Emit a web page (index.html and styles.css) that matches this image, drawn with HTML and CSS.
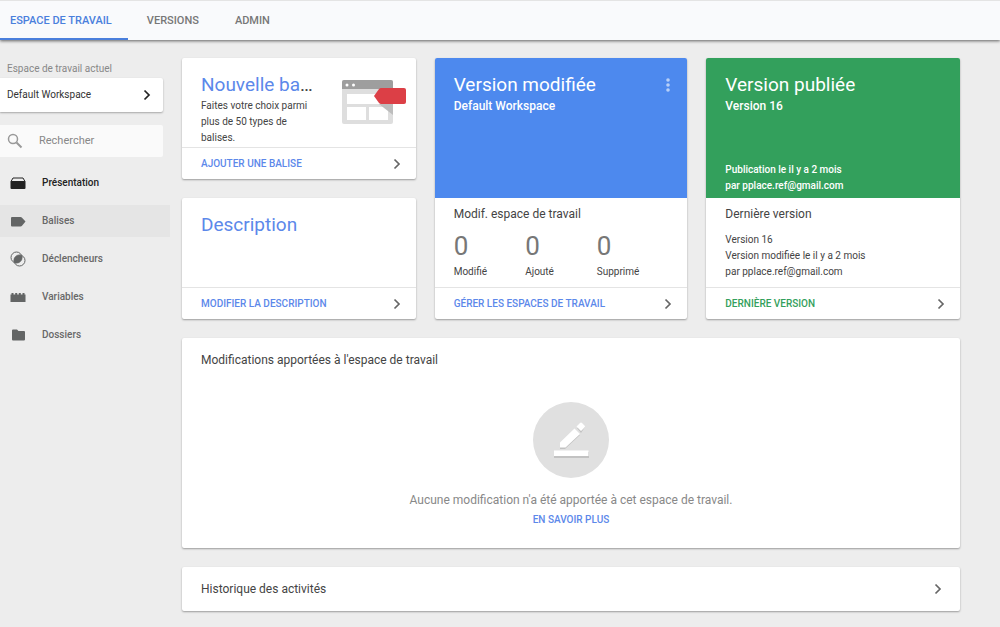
FILE: index.html
```html
<!DOCTYPE html>
<html lang="fr">
<head>
<meta charset="utf-8">
<meta name="viewport" content="width=device-width, initial-scale=1">
<title>Espace de travail</title>
<link rel="stylesheet" href="styles.css">
</head>
<body>
<svg class="defs" aria-hidden="true">
  <symbol id="chevron" viewBox="0 0 8 12"><path d="M1.500 1.500 6 6l-4.500 4.500" fill="none" stroke="currentColor" stroke-width="1.700"/></symbol>
</svg>
<header class="topbar">
  <nav class="tabs">
    <a class="tab tab-active" href="#" aria-current="page">ESPACE DE TRAVAIL</a>
    <a class="tab" href="#">VERSIONS</a>
    <a class="tab" href="#">ADMIN</a>
  </nav>
</header>
<div class="layout">
  <aside class="sidebar">
    <div class="workspace-label" id="workspace-label">Espace de travail actuel</div>
    <button class="workspace" type="button" aria-describedby="workspace-label">Default Workspace <svg class="chevron"><use href="#chevron"/></svg></button>
    <label class="search">
      <svg class="search-icon" viewBox="0 0 16 16" aria-hidden="true"><circle cx="6" cy="6" r="4.500" fill="none" stroke="currentColor" stroke-width="1.500"/><path d="m9.500 9.500 5 5" stroke="currentColor" stroke-width="2"/></svg>
      <input class="search-input" type="text" placeholder="Rechercher" aria-label="Rechercher">
    </label>
    <nav class="menu">
      <a class="menu-item menu-current" href="#"><svg class="menu-icon" viewBox="0 0 16 16"><path d="M1 6.500 3 3h10l2 3.500" fill="none" stroke="currentColor"/><path d="M.5 7q0-1 1-1h13q1 0 1 1v6q0 1-1 1h-13q-1 0-1-1z" fill="currentColor"/></svg>Présentation</a>
      <a class="menu-item menu-hover" href="#"><svg class="menu-icon" viewBox="0 0 16 16"><path d="M2 4h8.500q1 0 1.500.7L15.500 8.500 12 12.800q-.5.700-1.500.7H2q-1 0-1-1V5q0-1 1-1z" fill="currentColor"/></svg>Balises</a>
      <a class="menu-item" href="#"><svg class="menu-icon" viewBox="0 0 16 16"><g fill="none" stroke="currentColor"><circle cx="6.500" cy="6.500" r="5.500"/><circle cx="9.500" cy="9.500" r="5.500"/></g><path d="M11.600 4.400A5.500 5.500 0 0 1 4.400 11.600 5.500 5.500 0 0 1 11.600 4.400z" fill="currentColor"/></svg>Déclencheurs</a>
      <a class="menu-item" href="#"><svg class="menu-icon" viewBox="0 0 16 16"><path d="M.5 13V5.500h1V4h2v1.500h1.700V4h2v1.500h1.600V4h2v1.500h1.700V4h2v1.500h1V13z" fill="currentColor"/></svg>Variables</a>
      <a class="menu-item" href="#"><svg class="menu-icon" viewBox="0 0 16 16"><path d="M3 2.500h4L8.500 4H14q1 0 1 1v7.500q0 1-1 1H3q-1 0-1-1v-9q0-1 1-1z" fill="currentColor"/></svg>Dossiers</a>
    </nav>
  </aside>
  <main class="content">
    <section class="card new-tag">
      <div class="card-body split">
        <div class="split-text">
          <h2 class="title"><span class="blue">Nouvelle ba</span>…</h2>
          <p class="text">Faites votre choix parmi plus de 50 types de balises.</p>
        </div>
        <svg class="tag-art" viewBox="0 0 64 45" aria-hidden="true">
          <rect width="51" height="44" rx="2" fill="#dedede"/>
          <path d="M0 9V2q0-2 2-2h47q2 0 2 2v7z" fill="#9e9e9e"/>
          <circle cx="5" cy="5" r="1.500" fill="#fff"/><circle cx="11.500" cy="5" r="1.500" fill="#fff"/>
          <path d="M5 14h41v10H5zM5 27h19v13H5zM27 27h19v13H27z" fill="#fff"/>
          <path d="m37 24 14 11V24z" fill="#bdbdbd"/>
          <path d="M32 16 37 9q1-1 2-1h23q2 0 2 2v12q0 2-2 2H39q-1 0-2-1z" fill="#dc3f46"/>
        </svg>
      </div>
      <a class="card-link blue" href="#">AJOUTER UNE BALISE <svg class="chevron"><use href="#chevron"/></svg></a>
    </section>
    <section class="card description">
      <div class="card-body"><h2 class="title blue">Description</h2></div>
      <a class="card-link blue" href="#">MODIFIER LA DESCRIPTION <svg class="chevron"><use href="#chevron"/></svg></a>
    </section>
    <section class="card tall">
      <div class="hero hero-blue">
        <div class="hero-top">
          <h2 class="title">Version modifiée</h2>
          <button class="more" type="button" aria-label="Plus d'options"><svg class="more-icon" viewBox="0 0 4 14"><g fill="currentColor"><circle cx="2" cy="2" r="1.800"/><circle cx="2" cy="7" r="1.800"/><circle cx="2" cy="12" r="1.800"/></g></svg></button>
        </div>
        <p class="subtitle">Default Workspace</p>
      </div>
      <div class="details">
        <h3 class="heading">Modif. espace de travail</h3>
        <dl class="stats">
          <div class="stat"><dd class="stat-value">0</dd><dt class="text">Modifié</dt></div>
          <div class="stat"><dd class="stat-value">0</dd><dt class="text">Ajouté</dt></div>
          <div class="stat"><dd class="stat-value">0</dd><dt class="text">Supprimé</dt></div>
        </dl>
      </div>
      <a class="card-link blue" href="#">GÉRER LES ESPACES DE TRAVAIL <svg class="chevron"><use href="#chevron"/></svg></a>
    </section>
    <section class="card tall">
      <div class="hero hero-green">
        <h2 class="title">Version publiée</h2>
        <p class="subtitle">Version 16</p>
        <p class="text published">Publication le il y a 2 mois<br>par pplace.ref@gmail.com</p>
      </div>
      <div class="details">
        <h3 class="heading">Dernière version</h3>
        <p class="text">Version 16<br>Version modifiée le il y a 2 mois<br>par pplace.ref@gmail.com</p>
      </div>
      <a class="card-link green" href="#">DERNIÈRE VERSION <svg class="chevron"><use href="#chevron"/></svg></a>
    </section>
    <section class="card wide changes">
      <h3 class="heading">Modifications apportées à l'espace de travail</h3>
      <div class="empty">
        <svg class="empty-art" viewBox="0 0 76 76" aria-hidden="true">
          <circle cx="38" cy="38" r="38" fill="#e0e0e0"/>
          <g fill="#c2c2c2"><path d="M21 50h35v6H21zM27 47v-5l15-14 5 5-15 14zM44 26l8-1-4 6z"/></g>
          <g fill="#fff"><path d="M21 48.500h34.500v5.500H21zM27 45.500v-5L41.500 26.500l5.500 5.500-14.500 13.500zM43.500 24.500l3.500-3.500q1-1 2 0l2.500 2.500q1 1 0 2l-3.500 3.500z"/></g>
        </svg>
        <p class="empty-text">Aucune modification n'a été apportée à cet espace de travail.</p>
        <a class="learn blue" href="#">EN SAVOIR PLUS</a>
      </div>
    </section>
    <section class="card wide">
      <button class="history" type="button">Historique des activités <svg class="chevron"><use href="#chevron"/></svg></button>
    </section>
  </main>
</div>
</body>
</html>
```
FILE: styles.css
```css
* { box-sizing: border-box; }
body { margin: 0; background: #ededed; color: #444; font: 10px/16px Roboto, "Open Sans", sans-serif; }
h2, h3, p, dl, dd { margin: 0; }
a { text-decoration: none; color: inherit; }
button, input { font: inherit; color: inherit; border: 0; background: none; padding: 0; }
button { cursor: pointer; text-align: left; }
.defs { display: none; }
.blue { color: #5c88ea; }
.green { color: #33a05c; }

.topbar { background: #f9fafc; border-top: 1px solid #e4e4e4; box-shadow: 0 1px 3px rgba(0, 0, 0, .6); }
.tabs { display: flex; }
.tab { height: 39px; padding: 0 18px; font-size: 11px; font-weight: 500; line-height: 39px; color: #777; }
.tab-active { padding: 0 16px 0 10px; margin-right: 1px; color: #4a7fdc; border-bottom: 2px solid #4a7fdc; }

.layout { display: flex; gap: 12px; padding: 18px 40px 15px 0; }
.sidebar { flex: 0 0 170px; padding-top: 3px; }
.workspace-label { padding-left: 7px; margin-bottom: 1px; color: #888; }
.workspace { display: flex; align-items: center; justify-content: space-between; width: 163px; height: 34px; padding: 0 12px 0 7px; background: #fff; border-radius: 0 2px 2px 0; box-shadow: 0 1px 2px rgba(0, 0, 0, .3); color: #333; }
.chevron { flex: none; width: 8px; height: 12px; color: #666; }
.workspace .chevron { color: #222; }
.search { display: flex; align-items: center; gap: 16px; width: 163px; height: 32px; margin: 13px 0 10px; padding-left: 7px; background: #fafafa; border-radius: 0 2px 2px 0; font-size: 11px; }
.search-icon { flex: none; width: 16px; height: 16px; color: #999; }
.search-input { min-width: 0; flex: 1; outline: 0; }
.search-input::placeholder { color: #888; opacity: 1; }
.menu { display: grid; gap: 6px; }
.menu-item { display: flex; align-items: center; gap: 16px; height: 32px; padding-left: 10px; font-weight: 500; color: #686868; }
.menu-icon { width: 16px; height: 16px; color: #636565; }
.menu-current, .menu-current .menu-icon { color: #222; }
.menu-hover { background: #e5e5e5; }

.content { flex: 1; min-width: 0; display: grid; grid-template-columns: 234fr 253fr 254fr; grid-template-rows: 121px 121px; gap: 19px; }
.card { display: flex; flex-direction: column; min-width: 0; background: #fff; border-radius: 2px; box-shadow: 0 1px 2px rgba(0, 0, 0, .35); overflow: hidden; }
.description { grid-column: 1; grid-row: 2; }
.tall { grid-row: 1 / 3; }
.wide { grid-column: 1 / -1; }
.card-body { flex: 1; padding: 13px 19px 0; }
.split { display: flex; justify-content: space-between; padding-right: 10px; }
.split-text { width: 114px; }
.tag-art { flex: none; width: 64px; height: 45px; margin-top: 9px; }
.title { font-size: 19px; line-height: 27px; font-weight: 400; }
.card-link { display: flex; align-items: center; justify-content: space-between; height: 32px; padding: 0 15px 0 19px; border-top: 1px solid #e4e4e4; font-weight: 500; }
.hero { display: flex; flex-direction: column; height: 140px; padding: 13px 15px 4px 19px; color: #fff; }
.hero-blue { background: #4d89ee; }
.hero-green { background: #33a05c; }
.hero-top { display: flex; justify-content: space-between; }
.more { display: flex; align-items: center; width: 6px; color: #b8d0f8; }
.more-icon { width: 4px; height: 14px; }
.subtitle { font-size: 12px; font-weight: 500; }
.published { margin-top: auto; font-weight: 500; }
.details { flex: 1; padding: 8px 19px 0; }
.heading { font-size: 12px; line-height: 16px; font-weight: 400; color: #444; }
.details .heading { margin-bottom: 10px; }
.stats { display: flex; }
.stat { display: flex; flex-direction: column; width: 72px; }
.stat-value { padding-bottom: 4px; font-size: 26px; line-height: 28px; color: #777; }
.changes { padding: 14px 19px 20px; }
.empty { display: flex; flex-direction: column; align-items: center; margin-top: 34px; }
.empty-art { width: 76px; height: 76px; }
.empty-text { margin: 14px 0 4px; font-size: 12px; color: #888; }
.learn { font-weight: 500; }
.history { display: flex; align-items: center; justify-content: space-between; height: 44px; padding: 0 18px 0 19px; font-size: 12px; }
```
